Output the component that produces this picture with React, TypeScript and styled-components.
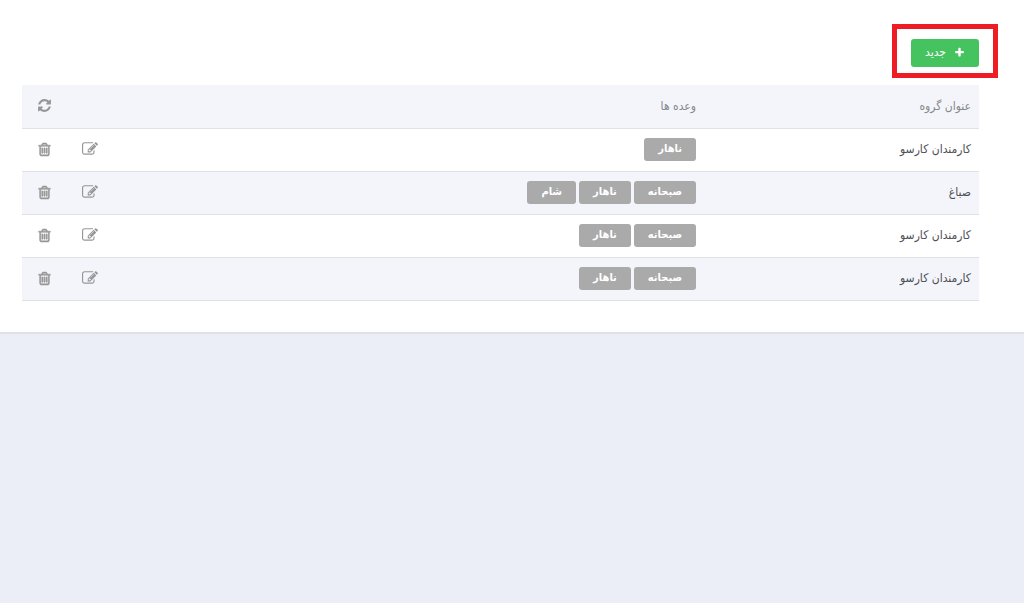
import React from "react";
import styled, { createGlobalStyle } from "styled-components";

const GlobalStyle = createGlobalStyle`
  *, *::before, *::after { box-sizing: border-box; }
  body {
    margin: 0;
    background: #ebeef7;
    color: #4d4f54;
    font-family: "DejaVu Sans Condensed", "DejaVu Sans", sans-serif;
    font-size: 12px;
    line-height: 20px;
  }
`;

const Panel = styled.main`
  background: #fff;
  border-bottom: 2px solid #e0e1e7;
  padding: 24px 26px 31px 22px;
`;

const Toolbar = styled.div`
  display: flex;
`;

const Highlight = styled.div`
  border: 5px solid #ee1c25;
  padding: 10px 14px 6px;
`;

const NewButton = styled.button`
  display: flex;
  align-items: center;
  justify-content: center;
  gap: 8px;
  width: 68px;
  height: 28px;
  padding: 0 0 2px;
  border: 0;
  border-radius: 3px;
  background: #45c35f;
  color: #fff;
  font: inherit;
  cursor: pointer;
`;

const TableArea = styled.div`
  padding-right: 19px;
  margin-top: 7px;
`;

const Table = styled.table`
  width: 100%;
  table-layout: fixed;
  border-collapse: separate;
  border-spacing: 0;
`;

const TitleColumn = styled.col`
  width: 275px;
`;

const EditColumn = styled.col`
  width: 46px;
`;

const DeleteColumn = styled.col`
  width: 38px;
`;

const Row = styled.tr<{ $shaded?: boolean }>`
  height: 43px;
  background: ${(p) => (p.$shaded ? "#f4f5fa" : "#fff")};
`;

const HeadRow = styled(Row)`
  height: 44px;
`;

const cell = `
  padding: 0 8px 2px;
  border-bottom: 1px solid #dfe1e5;
  text-align: right;
  vertical-align: middle;
  font-weight: 400;
`;

const HeadCell = styled.th`
  ${cell}
  color: #85878c;
`;

const Cell = styled.td`
  ${cell}
`;

const Tags = styled.div`
  display: flex;
  gap: 3px;
`;

const Tag = styled.span`
  height: 23px;
  padding: 1px 14px;
  border-radius: 3px;
  background: #aaa;
  color: #fff;
  font-size: 11px;
  font-weight: 700;
`;

const IconButton = styled.button`
  display: flex;
  padding: 0;
  border: 0;
  background: none;
  color: #969696;
  cursor: pointer;
`;

const PATHS = {
  plus: "M1600 736v192q0 40-28 68t-68 28h-416v416q0 40-28 68t-68 28h-192q-40 0-68-28t-28-68v-416h-416q-40 0-68-28t-28-68v-192q0-40 28-68t68-28h416v-416q0-40 28-68t68-28h192q40 0 68 28t28 68v416h416q40 0 68 28t28 68z",
  refresh:
    "M1639 1056q0 5-1 7-64 268-268 434.5t-478 166.5q-146 0-282.5-55t-243.5-157l-129 129q-19 19-45 19t-45-19-19-45v-448q0-26 19-45t45-19h448q26 0 45 19t19 45-19 45l-137 137q71 66 161 102t187 36q134 0 250-65t186-179q11-17 53-117 8-23 30-23h192q13 0 22.5 9.5t9.5 22.5zm25-800v448q0 26-19 45t-45 19h-448q-26 0-45-19t-19-45 19-45l138-138q-148-137-349-137-134 0-250 65t-186 179q-11 17-53 117-8 23-30 23h-199q-13 0-22.5-9.5t-9.5-22.5v-7q65-268 270-434.5t480-166.5q146 0 284 55.5t245 156.5l130-129q19-19 45-19t45 19 19 45z",
  trash:
    "M704 736v576q0 14-9 23t-23 9h-64q-14 0-23-9t-9-23v-576q0-14 9-23t23-9h64q14 0 23 9t9 23zm256 0v576q0 14-9 23t-23 9h-64q-14 0-23-9t-9-23v-576q0-14 9-23t23-9h64q14 0 23 9t9 23zm256 0v576q0 14-9 23t-23 9h-64q-14 0-23-9t-9-23v-576q0-14 9-23t23-9h64q14 0 23 9t9 23zm128 724v-948h-896v948q0 22 7 40.5t14.5 27 10.5 8.5h832q3 0 10.5-8.5t14.5-27 7-40.5zm-672-1076h448l-48-117q-7-9-17-11h-317q-10 2-17 11zm928 32v64q0 14-9 23t-23 9h-96v948q0 83-47 143.5t-113 60.5h-832q-66 0-113-58.5t-47-141.5v-952h-96q-14 0-23-9t-9-23v-64q0-14 9-23t23-9h309l70-167q15-37 54-63t79-26h320q40 0 79 26t54 63l70 167h309q14 0 23 9t9 23z",
  edit: "M888 1184l116-116-152-152-116 116v56h96v96h56zm440-720q-16-16-33 1l-350 350q-17 17-1 33t33-1l350-350q17-17 1-33zm80 594v190q0 119-84.5 203.5t-203.5 84.5h-832q-119 0-203.5-84.5t-84.5-203.5v-832q0-119 84.5-203.5t203.5-84.5h832q63 0 117 25 15 7 18 23 3 17-9 29l-49 49q-14 14-32 8-23-6-45-6h-832q-66 0-113 47t-47 113v832q0 66 47 113t113 47h832q66 0 113-47t47-113v-126q0-13 9-22l64-64q15-15 35-7t20 29zm-96-738l288 288-672 672h-288v-288zm444 132l-92 92-288-288 92-92q28-28 68-28t68 28l152 152q28 28 28 68t-28 68z",
};

function Icon({ name, size, weight = 0 }: { name: keyof typeof PATHS; size: number; weight?: number }) {
  return (
    <svg
      width={size}
      height={size}
      viewBox="0 0 1792 1792"
      fill="currentColor"
      stroke="currentColor"
      strokeWidth={weight}
      aria-hidden="true"
    >
      <path d={PATHS[name]} />
    </svg>
  );
}

const GROUPS = [
  { title: "کارمندان کارسو", meals: ["ناهار"] },
  { title: "صباغ", meals: ["صبحانه", "ناهار", "شام"] },
  { title: "کارمندان کارسو", meals: ["صبحانه", "ناهار"] },
  { title: "کارمندان کارسو", meals: ["صبحانه", "ناهار"] },
];

export default function App() {
  return (
    <>
      <GlobalStyle />
      <Panel dir="rtl" lang="fa">
        <Toolbar>
          <Highlight>
            <NewButton type="button">
              <Icon name="plus" size={11} />
              جدید
            </NewButton>
          </Highlight>
        </Toolbar>
        <TableArea>
          <Table>
            <colgroup>
              <TitleColumn />
              <col />
              <EditColumn />
              <DeleteColumn />
            </colgroup>
            <thead>
              <HeadRow $shaded>
                <HeadCell scope="col">عنوان گروه</HeadCell>
                <HeadCell scope="col">وعده ها</HeadCell>
                <HeadCell />
                <HeadCell>
                  <IconButton type="button" aria-label="بارگذاری دوباره">
                    <Icon name="refresh" size={15} />
                  </IconButton>
                </HeadCell>
              </HeadRow>
            </thead>
            <tbody>
              {GROUPS.map((group, i) => (
                <Row key={i} $shaded={i % 2 === 1}>
                  <Cell>{group.title}</Cell>
                  <Cell>
                    <Tags>
                      {group.meals.map((meal) => (
                        <Tag key={meal}>{meal}</Tag>
                      ))}
                    </Tags>
                  </Cell>
                  <Cell>
                    <IconButton type="button" aria-label="ویرایش">
                      <Icon name="edit" size={16} />
                    </IconButton>
                  </Cell>
                  <Cell>
                    <IconButton type="button" aria-label="حذف">
                      <Icon name="trash" size={15} weight={70} />
                    </IconButton>
                  </Cell>
                </Row>
              ))}
            </tbody>
          </Table>
        </TableArea>
      </Panel>
    </>
  );
}
